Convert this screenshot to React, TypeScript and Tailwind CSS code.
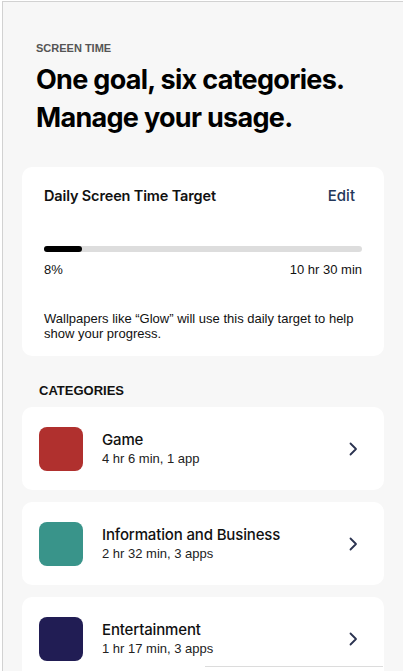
const categories = [
  { name: "Game", usage: "4 hr 6 min, 1 app", color: "bg-[#b0302e]" },
  { name: "Information and Business", usage: "2 hr 32 min, 3 apps", color: "bg-[#39948a]" },
  { name: "Entertainment", usage: "1 hr 17 min, 3 apps", color: "bg-[#211d54]" },
];

const inter = { fontFamily: "Inter, 'Liberation Sans', sans-serif" };

const Chevron = () => (
  <svg width="10" height="14" viewBox="0 0 10 14" fill="none">
    <path d="M2.5 1.5 L8 7 L2.5 12.5" stroke="#2b3350" strokeWidth="1.8" strokeLinecap="round" strokeLinejoin="round" />
  </svg>
);

export default function App() {
  return (
    <div
      className="relative h-[671px] w-[403px] overflow-hidden bg-white pl-[2px] pt-[1px]"
      style={{ fontFamily: "'Liberation Sans', Arial, sans-serif" }}
    >
      <div className="h-full border-l border-t border-[#d2d2d2] bg-[#f7f7f7] pl-[19px] pr-[19px]">
        <div className="pl-[14px] pt-[39px]">
          <p className="text-[11px] font-bold leading-[14px] text-[#555]">SCREEN TIME</p>
          <h1 style={inter} className="mt-[6px] text-[27px] font-bold leading-[38px] tracking-[-0.026em] text-black">
            One goal, six categories.
            <br />
            Manage your usage.
          </h1>
        </div>

        <div className="mt-[30px] rounded-[10px] bg-white px-[22px] pb-[15px] pt-[19px]">
          <div className="flex items-center justify-between">
            <h2 style={inter} className="text-[14.5px] font-semibold leading-[20px] tracking-[-0.01em] text-[#111]">
              Daily Screen Time Target
            </h2>
            <button style={inter} className="pr-[7px] text-[15px] font-medium leading-[20px] text-[#24375a]">
              Edit
            </button>
          </div>
          <div className="mt-[40px] h-[6px] w-full rounded-full bg-[#dddddd]">
            <div className="h-full w-[12%] rounded-full bg-black" />
          </div>
          <div className="mt-[10px] flex justify-between text-[13px] leading-[16px] text-[#111]">
            <span>8%</span>
            <span>10 hr 30 min</span>
          </div>
          <p className="mt-[33px] pr-[4px] text-[13px] leading-[15px] text-[#111]">
            Wallpapers like “Glow” will use this daily target to help show your progress.
          </p>
        </div>

        <p className="mt-[27px] pl-[17px] text-[13px] font-bold leading-[16px] text-[#111]">CATEGORIES</p>

        <div className="mt-[8px] flex flex-col gap-[12px]">
          {categories.map((c) => (
            <div key={c.name} className="flex h-[83px] items-center rounded-[10px] bg-white pl-[17px] pr-[26px]">
              <div className={`h-[44px] w-[44px] rounded-[8px] ${c.color}`} />
              <div className="ml-[19px] flex-1">
                <p style={inter} className="text-[15px] font-medium leading-[19px] tracking-[-0.01em] text-[#111]">
                  {c.name}
                </p>
                <p className="mt-[2px] text-[13px] leading-[16px] text-[#222]">{c.usage}</p>
              </div>
              <Chevron />
            </div>
          ))}
        </div>
      </div>
      <div className="absolute bottom-0 left-[205px] h-[5px] w-[178px] border-t border-[#dcdcdc] bg-white" />
    </div>
  );
}
